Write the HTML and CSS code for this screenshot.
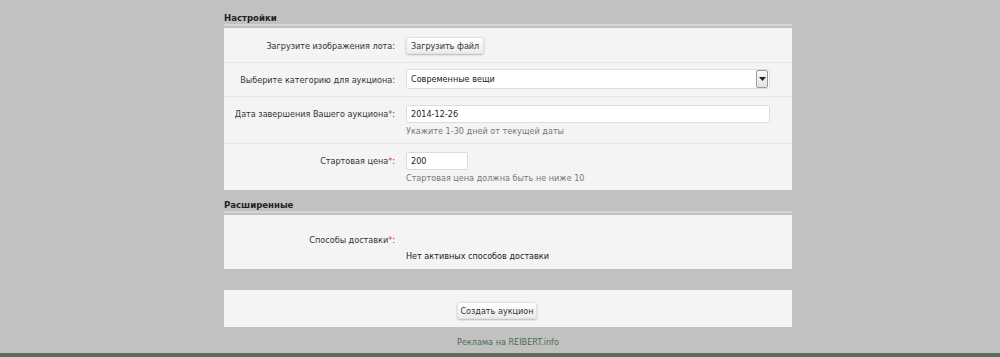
FILE: index.html
```html
<!DOCTYPE html>
<html lang="ru">
<head>
    <meta charset="UTF-8">
    <title>Создать аукцион</title>
    <link rel="stylesheet" href="styles.css">
</head>
<body>
    <div class="wrap">
        <h3 class="section-title">Настройки</h3>
        <div class="panel">
            <div class="row row-short">
                <label class="row-label">Загрузите изображения лота:</label>
                <div class="row-field">
                    <button class="btn">Загрузить файл</button>
                </div>
            </div>
            <div class="row row-short">
                <label class="row-label">Выберите категорию для аукциона:</label>
                <div class="row-field">
                    <div class="select">
                        <span class="select-text">Современные вещи</span>
                        <span class="select-arrow">
                            <svg width="7" height="4" viewBox="0 0 7 4"><path d="M0 0h7L3.5 4z" fill="#222"/></svg>
                        </span>
                    </div>
                </div>
            </div>
            <div class="row">
                <label class="row-label">Дата завершения Вашего аукциона<span class="req">*</span>:</label>
                <div class="row-field">
                    <input class="text-input" type="text" value="2014-12-26">
                    <div class="hint">Укажите 1-30 дней от текущей даты</div>
                </div>
            </div>
            <div class="row">
                <label class="row-label">Стартовая цена<span class="req">*</span>:</label>
                <div class="row-field">
                    <input class="text-input price-input" type="text" value="200">
                    <div class="hint">Стартовая цена должна быть не ниже 10</div>
                </div>
            </div>
        </div>

        <h3 class="section-title">Расширенные</h3>
        <div class="panel">
            <div class="row row-delivery">
                <label class="row-label">Способы доставки<span class="req">*</span>:</label>
                <div class="row-field">
                    <div class="empty-note">Нет активных способов доставки</div>
                </div>
            </div>
        </div>

        <div class="panel submit-panel">
            <button class="btn">Создать аукцион</button>
        </div>

        <div class="footer">Реклама на REIBERT.info</div>
    </div>
    <div class="bottom-line"></div>
</body>
</html>
```

FILE: styles.css
```css
body {
    margin: 0;
    background-color: #c1c1c1;
    font-family: 'DejaVu Sans Condensed', 'DejaVu Sans', sans-serif;
    font-size: 9px;
    color: #333;
}
.wrap {
    width: 568px;
    margin-left: calc(50% - 276px);
    padding-top: 12px;
}
.section-title {
    margin: 0 0 2px;
    padding-bottom: 0;
    border-bottom: 2px solid #d6d6d6;
    font-size: 9.5px;
    font-weight: bold;
    line-height: 12px;
    color: #222;
}
.panel {
    background-color: #f4f4f4;
    margin-bottom: 9px;
}
.row {
    display: grid;
    grid-template-columns: 171px 1fr;
    column-gap: 11px;
    box-sizing: border-box;
    height: 47px;
    padding: 8px 22px 0 0;
    border-top: 1px solid #e6e6e6;
}
.row:first-child {
    border-top: none;
}
.row-short {
    height: 34px;
    padding-top: 0;
    align-items: center;
}
.row-short:first-child {
    padding-top: 1px;
}
.row-label {
    text-align: right;
    line-height: 18px;
    white-space: nowrap;
}
.req {
    color: #e03030;
}
.btn {
    font-family: inherit;
    font-size: 9px;
    color: #333;
    height: 17px;
    padding: 0 4px;
    border: 1px solid #e2e2e2;
    border-radius: 3px;
    background: linear-gradient(#ffffff, #ececec);
    box-shadow: 0 1px 2px rgba(0, 0, 0, 0.25);
    cursor: pointer;
}
.select {
    display: flex;
    align-items: center;
    box-sizing: border-box;
    height: 20px;
    margin-top: -2px;
    background-color: #fff;
    border: 1px solid #dcdcdc;
    border-radius: 2px;
}
.select-text {
    flex-grow: 1;
    padding-left: 4px;
    color: #222;
}
.select-arrow {
    display: flex;
    align-items: center;
    justify-content: center;
    width: 10px;
    height: 16px;
    margin-right: 1px;
    border: 1px solid #999;
    border-radius: 2px;
    background: linear-gradient(#fafafa, #e2e2e2);
}
.text-input {
    display: block;
    box-sizing: border-box;
    width: 100%;
    height: 18px;
    padding: 0 4px;
    font-family: inherit;
    font-size: 9px;
    color: #222;
    background-color: #fff;
    border: 1px solid #dcdcdc;
    border-radius: 2px;
    outline: none;
}
.price-input {
    width: 62px;
}
.hint {
    margin-top: 2px;
    line-height: 12px;
    color: #777;
}
.row-delivery {
    height: 54px;
    padding-top: 16px;
}
.empty-note {
    padding-top: 20px;
    color: #222;
}
.submit-panel {
    box-sizing: border-box;
    height: 37px;
    padding: 12px 22px 0 0;
    text-align: center;
    margin-top: 21px;
    margin-bottom: 0;
}
.submit-panel .btn {
    padding: 0 2px;
}
.footer {
    padding-top: 9px;
    text-align: center;
    color: #4b6e4b;
    line-height: 12px;
}
.bottom-line {
    margin-top: 5px;
    height: 4px;
    background-color: #56705a;
}
```
